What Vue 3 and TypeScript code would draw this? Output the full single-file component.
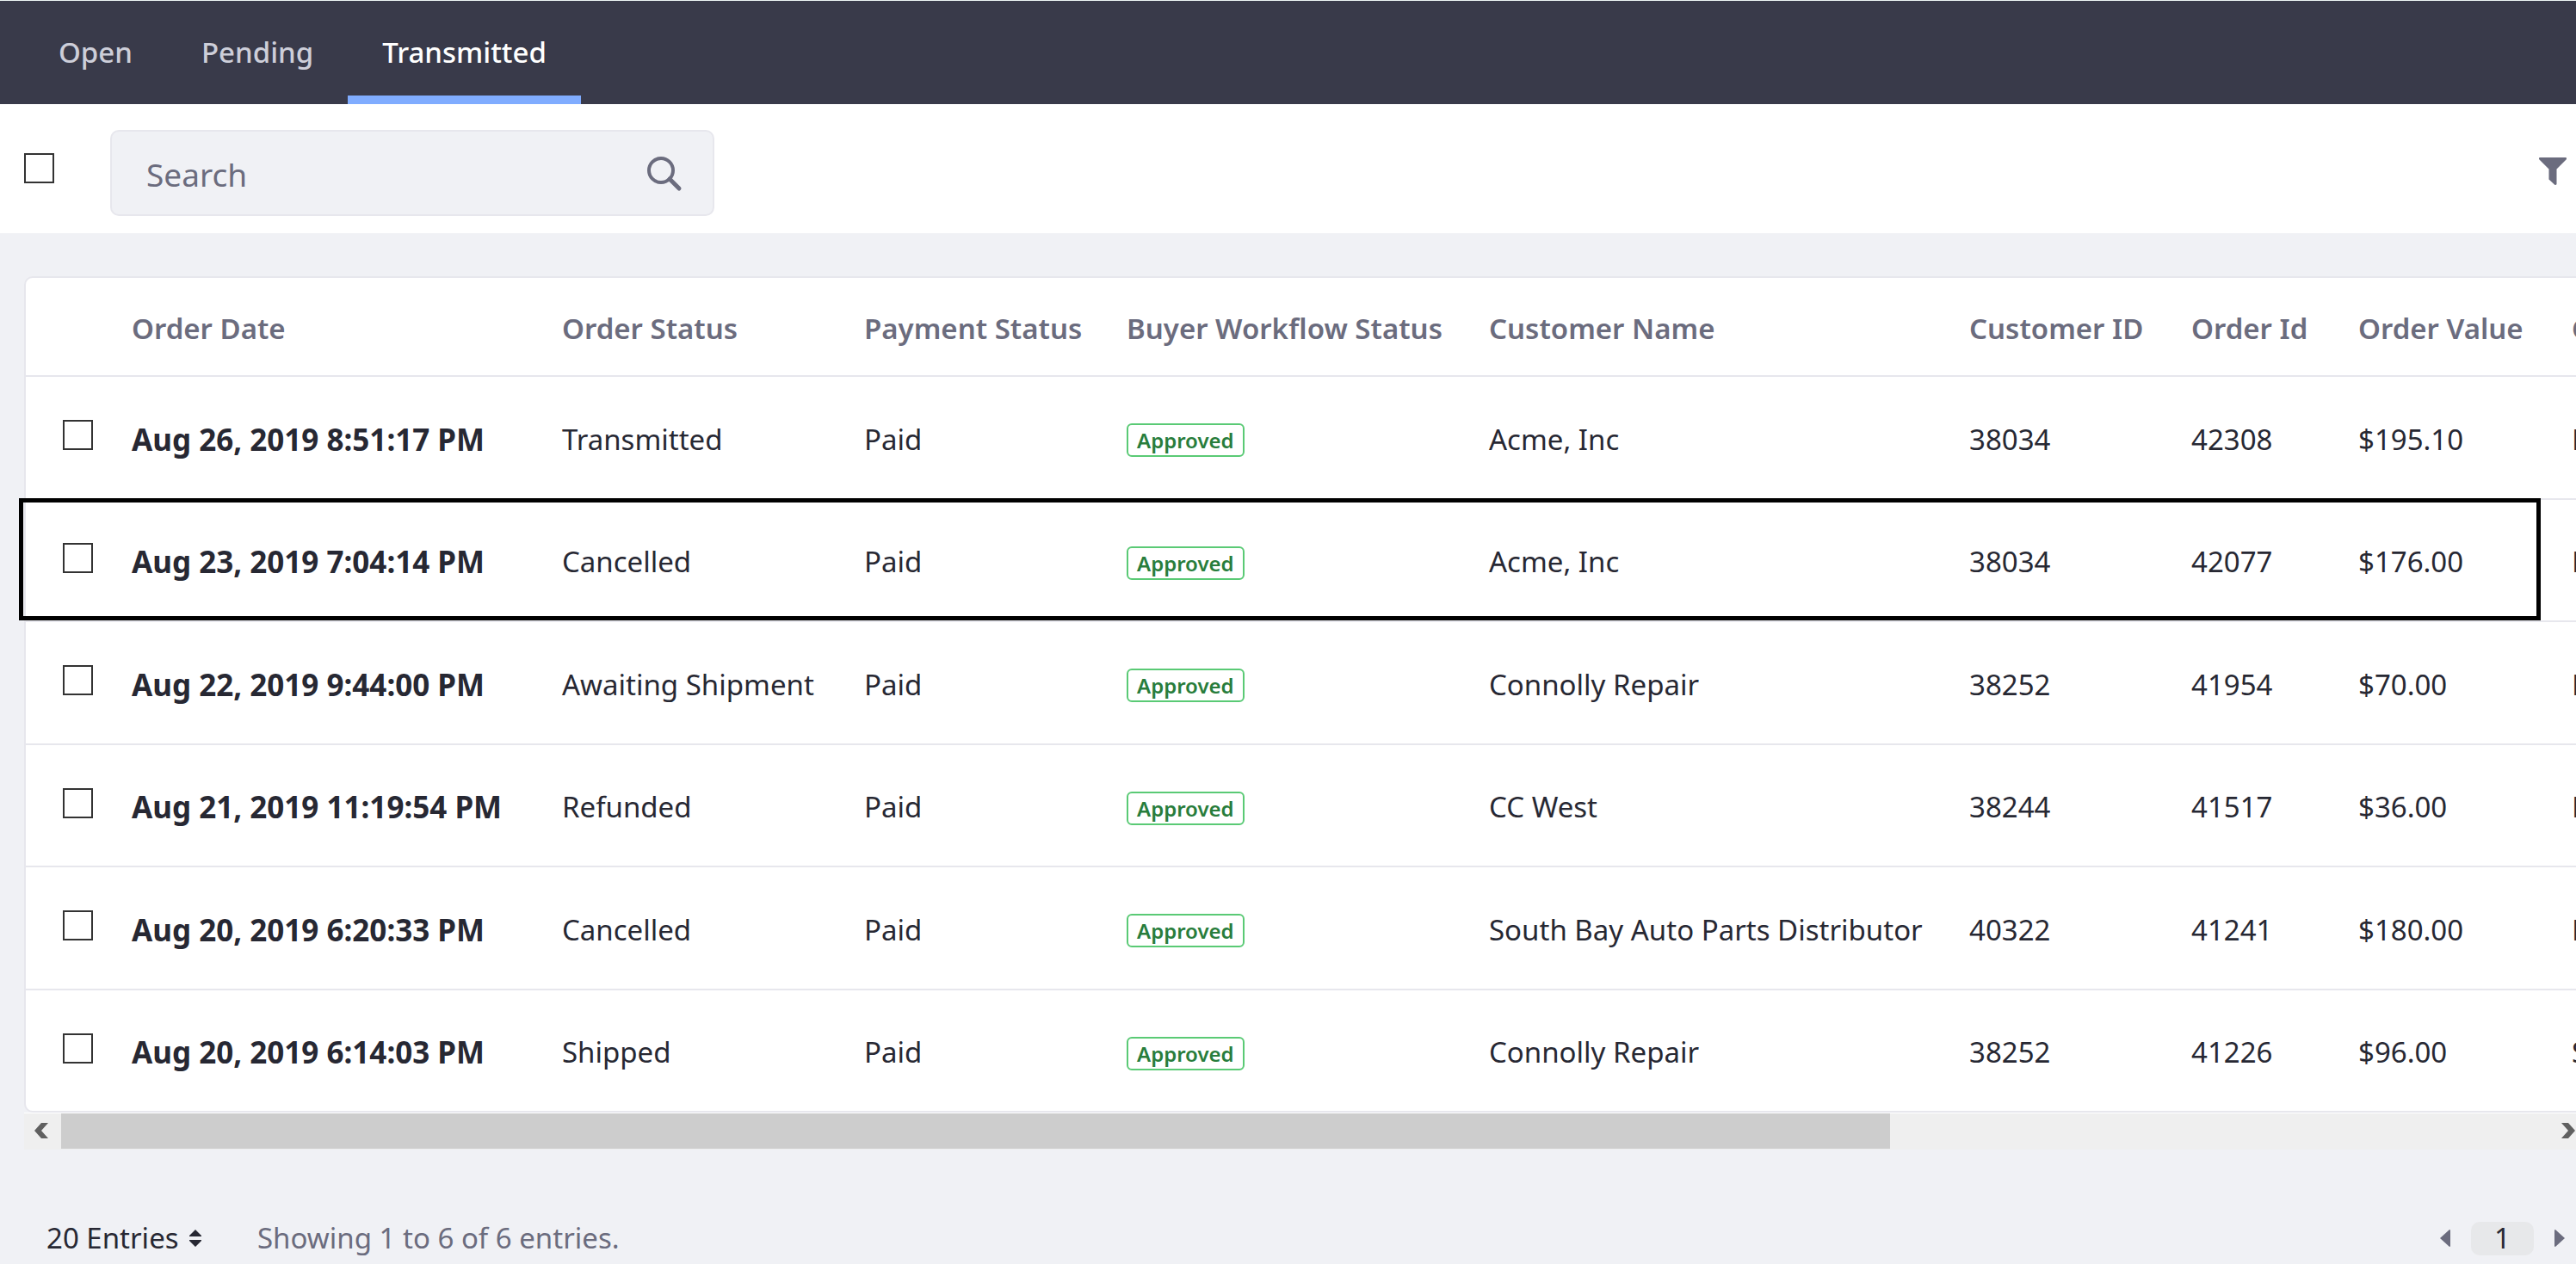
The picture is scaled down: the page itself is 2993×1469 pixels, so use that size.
<script setup lang="ts">
import { ref } from 'vue'

interface Order {
  date: string
  status: string
  payment: string
  workflow: string
  customer: string
  customerId: string
  orderId: string
  value: string
  extra: string
  highlighted?: boolean
}

const tabs = ['Open', 'Pending', 'Transmitted']
const activeTab = ref('Transmitted')
const search = ref('')

const columns = [
  { key: 'date', label: 'Order Date' },
  { key: 'status', label: 'Order Status' },
  { key: 'payment', label: 'Payment Status' },
  { key: 'workflow', label: 'Buyer Workflow Status' },
  { key: 'customer', label: 'Customer Name' },
  { key: 'customer-id', label: 'Customer ID' },
  { key: 'order-id', label: 'Order Id' },
  { key: 'value', label: 'Order Value' },
  { key: 'extra', label: 'C' },
]

const orders: Order[] = [
  { date: 'Aug 26, 2019 8:51:17 PM', status: 'Transmitted', payment: 'Paid', workflow: 'Approved', customer: 'Acme, Inc', customerId: '38034', orderId: '42308', value: '$195.10', extra: 'M' },
  { date: 'Aug 23, 2019 7:04:14 PM', status: 'Cancelled', payment: 'Paid', workflow: 'Approved', customer: 'Acme, Inc', customerId: '38034', orderId: '42077', value: '$176.00', extra: 'M', highlighted: true },
  { date: 'Aug 22, 2019 9:44:00 PM', status: 'Awaiting Shipment', payment: 'Paid', workflow: 'Approved', customer: 'Connolly Repair', customerId: '38252', orderId: '41954', value: '$70.00', extra: 'M' },
  { date: 'Aug 21, 2019 11:19:54 PM', status: 'Refunded', payment: 'Paid', workflow: 'Approved', customer: 'CC West', customerId: '38244', orderId: '41517', value: '$36.00', extra: 'M' },
  { date: 'Aug 20, 2019 6:20:33 PM', status: 'Cancelled', payment: 'Paid', workflow: 'Approved', customer: 'South Bay Auto Parts Distributor', customerId: '40322', orderId: '41241', value: '$180.00', extra: 'M' },
  { date: 'Aug 20, 2019 6:14:03 PM', status: 'Shipped', payment: 'Paid', workflow: 'Approved', customer: 'Connolly Repair', customerId: '38252', orderId: '41226', value: '$96.00', extra: 'S' },
]
</script>

<template>
  <div class="page">
    <nav class="tabs">
      <a
        v-for="tab in tabs"
        :key="tab"
        href="#"
        class="tab"
        :class="{ active: tab === activeTab }"
        @click.prevent="activeTab = tab"
      >{{ tab }}</a>
    </nav>

    <div class="toolbar">
      <input class="check" type="checkbox" aria-label="Select all orders" />
      <form class="search" role="search" @submit.prevent>
        <input v-model="search" class="search-input" type="text" placeholder="Search" aria-label="Search" />
        <button class="search-button" type="submit" aria-label="Submit search">
          <svg width="42" height="42" viewBox="0 0 42 42" fill="none" stroke="currentColor">
            <circle cx="17" cy="17" r="14" stroke-width="4" />
            <path d="M27 27 38 38" stroke-width="5" stroke-linecap="round" />
          </svg>
        </button>
      </form>
      <button class="filter" type="button" aria-label="Filter">
        <svg width="32" height="32" viewBox="0 0 32 32" fill="currentColor">
          <path d="M1 0h30q1 0 1 1v1L20.500 13.500V31q0 1-2 1L11.500 25.500V13.500L0 2V1q0-1 1-1z" />
        </svg>
      </button>
    </div>

    <main class="content">
      <div class="card">
        <table class="orders">
          <colgroup>
            <col class="col-check" />
            <col v-for="column in columns" :key="column.key" :class="`col-${column.key}`" />
          </colgroup>
          <thead>
            <tr>
              <td></td>
              <th v-for="column in columns" :key="column.key" scope="col">{{ column.label }}</th>
            </tr>
          </thead>
          <tbody>
            <tr v-for="order in orders" :key="order.orderId" :class="{ highlighted: order.highlighted }">
              <td class="check-cell"><input class="check" type="checkbox" :aria-label="`Select order ${order.orderId}`" /></td>
              <td class="date">{{ order.date }}</td>
              <td>{{ order.status }}</td>
              <td>{{ order.payment }}</td>
              <td class="badge-cell"><span class="badge">{{ order.workflow }}</span></td>
              <td>{{ order.customer }}</td>
              <td>{{ order.customerId }}</td>
              <td>{{ order.orderId }}</td>
              <td>{{ order.value }}</td>
              <td>{{ order.extra }}</td>
            </tr>
          </tbody>
        </table>
      </div>

      <div class="scrollbar">
        <button class="scroll-button" type="button" aria-label="Scroll left">
          <svg width="16" height="18" viewBox="0 0 16 18" fill="currentColor"><path d="M8 0h8L8 9l8 9H8L0 9z" /></svg>
        </button>
        <div class="scroll-track"><div class="scroll-thumb"></div></div>
        <button class="scroll-button" type="button" aria-label="Scroll right">
          <svg width="16" height="18" viewBox="0 0 16 18" fill="currentColor"><path d="M8 0H0l8 9-8 9h8l8-9z" /></svg>
        </button>
      </div>

      <footer class="footer">
        <label class="entries">
          <select class="entries-select" aria-label="Entries per page">
            <option>20 Entries</option>
          </select>
          <svg width="14" height="20" viewBox="0 0 14 20" fill="currentColor">
            <path d="M7 0 14 7v1H0V7zM7 20l7-7v-1H0v1z" />
          </svg>
        </label>
        <span class="summary">Showing 1 to 6 of 6 entries.</span>
        <div class="pagination">
          <button class="page-arrow" type="button" aria-label="Previous page">
            <svg width="12" height="20" viewBox="0 0 12 20" fill="currentColor"><path d="M12 1v18q0 1-1 1L0 10 11 0q1 0 1 1z" /></svg>
          </button>
          <button class="page-number" type="button" aria-current="page">1</button>
          <button class="page-arrow" type="button" aria-label="Next page">
            <svg width="12" height="20" viewBox="0 0 12 20" fill="currentColor"><path d="M0 1v18q0 1 1 1l11-10L1 0Q0 0 0 1z" /></svg>
          </button>
        </div>
      </footer>
    </main>
  </div>
</template>

<style>
body {
  background: #f0f1f5;
}
</style>

<style scoped>
.page {
  overflow-x: clip;
  font-family: "Noto Sans", "Open Sans", sans-serif;
  font-size: 33px;
  line-height: 44px;
  color: #272833;
  background: #f0f1f5;
}

button,
input,
select {
  margin: 0;
  padding: 0;
  border: 0;
  background: none;
  font: inherit;
  color: inherit;
}

button {
  display: flex;
  align-items: center;
  justify-content: center;
}

svg {
  display: block;
  flex: none;
}

.tabs {
  display: flex;
  height: 120px;
  padding-left: 28px;
  border-top: 1px solid #eef5f5;
  background: #393a4a;
}

.tab {
  display: flex;
  align-items: center;
  padding: 10px 40px 0;
  border-bottom: 10px solid transparent;
  color: #cdced9;
  font-weight: 500;
  text-decoration: none;
}

.tab.active {
  border-bottom-color: #80acff;
  color: #fff;
}

.check {
  appearance: none;
  display: block;
  flex: none;
  width: 35px;
  height: 35px;
  border: 2px solid #333;
  background: #fff;
}

.toolbar {
  display: flex;
  align-items: center;
  height: 150px;
  padding: 0 11px 0 28px;
  box-sizing: border-box;
  background: #fff;
}

.toolbar > .check {
  margin: 0 65px 2px 0;
}

.search {
  display: flex;
  align-items: center;
  width: 702px;
  height: 100px;
  margin-top: 10px;
  padding-top: 2px;
  box-sizing: border-box;
  border: 2px solid #e7e7ed;
  border-radius: 10px;
  background: #f0f1f5;
}

.search-input {
  flex: 1;
  min-width: 0;
  height: 60px;
  padding-left: 40px;
  font-size: 37px;
  outline: none;
}

.search-input::placeholder {
  color: #6b6c7e;
  opacity: 1;
}

.search-button {
  margin-right: 35px;
  color: #6b6c7e;
}

.filter {
  margin: 6px 0 0 auto;
  color: #6b6c7e;
}

.content {
  padding: 50px 0 0 28px;
}

.card {
  width: max-content;
  border: 2px solid #e7e7ed;
  border-radius: 10px;
  background: #fff;
}

.orders {
  table-layout: fixed;
  width: 3128px;
  border-spacing: 0;
}

.col-check { width: 93px; }
.col-date { width: 500px; }
.col-status { width: 351px; }
.col-payment { width: 305px; }
.col-workflow { width: 421px; }
.col-customer { width: 558px; }
.col-customer-id { width: 258px; }
.col-order-id { width: 194px; }
.col-value { width: 248px; }
.col-extra { width: 200px; }

.orders th,
.orders td {
  height: 143px;
  padding: 4px 0 0 30px;
  box-sizing: border-box;
  border-bottom: 2px solid #e7e7ed;
  text-align: left;
  vertical-align: middle;
  white-space: nowrap;
}

.orders thead th,
.orders thead td {
  height: 115px;
  color: #6b6c7e;
  font-weight: 600;
}

.orders tbody tr:nth-child(even) td {
  height: 142px;
}

.orders tbody tr:last-child td {
  height: 140px;
  border-bottom: 0;
}

.orders td.check-cell {
  padding: 0 0 6px 43px;
}

.orders td.badge-cell {
  padding-top: 6px;
}

.orders .date {
  font-size: 35px;
  font-weight: 700;
}

.highlighted {
  position: relative;
}

/* Outline that frames the row up to the order value */
.highlighted::after {
  content: "";
  position: absolute;
  top: -2px;
  right: 206px;
  bottom: 2px;
  left: -8px;
  border: 5px solid #000;
  pointer-events: none;
}

.badge {
  display: block;
  width: max-content;
  padding: 0 10px;
  border: 2px solid #5aca75;
  border-radius: 6px;
  color: #287d3c;
  font-size: 24px;
  font-weight: 600;
  line-height: 35px;
}

.scrollbar {
  display: flex;
  height: 42px;
  margin-right: -14px;
  border-top: 1px solid #fff;
  background: #efefef;
}

.scroll-button {
  width: 43px;
  padding: 0 3px 2px 0;
  color: #606060;
}

.scroll-track {
  flex: 1;
}

.scroll-thumb {
  width: calc(100% * 47 / 64);
  height: 41px;
  background: #cdcdcd;
}

.footer {
  display: flex;
  align-items: center;
  height: 80px;
  margin-top: 63px;
  padding: 0 13px 0 26px;
}

.entries {
  display: flex;
  align-items: center;
  gap: 12px;
}

.entries-select {
  appearance: none;
  height: 50px;
}

.summary {
  margin-left: 65px;
  color: #6b6c7e;
}

.pagination {
  display: flex;
  align-items: center;
  gap: 24px;
  margin-left: auto;
}

.page-arrow {
  color: #6b6c7e;
}

.page-number {
  width: 73px;
  height: 39px;
  border-radius: 10px;
  background: #e7e8ea;
}
</style>
